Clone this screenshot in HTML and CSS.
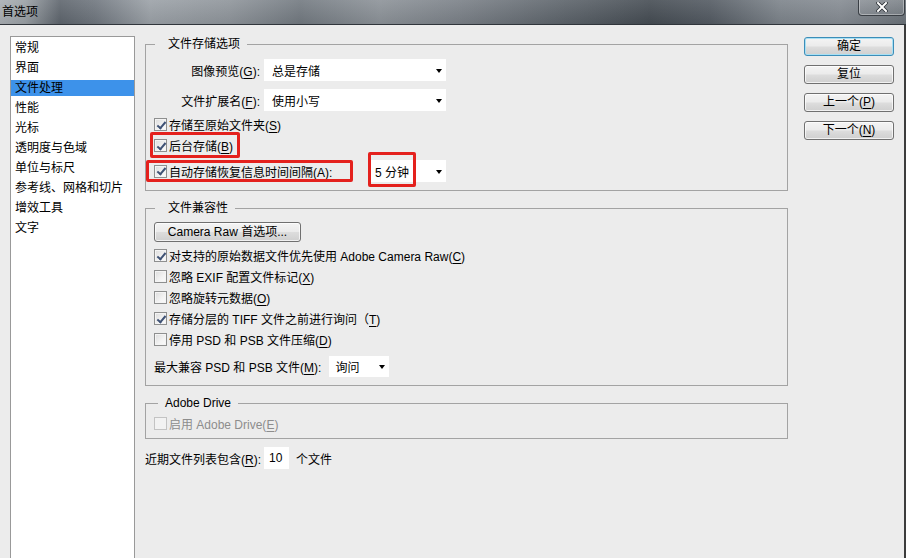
FILE: index.html
```html
<!DOCTYPE html>
<html lang="zh-CN">
<head>
<meta charset="utf-8">
<title>首选项</title>
<link rel="stylesheet" href="styles.css">
</head>
<body>
<div class="window">
  <div class="titlebar">
    <span class="title">首选项</span>
    <div class="close">
      <svg width="12" height="10" viewBox="0 0 12 10">
        <path d="M2 1 L10 9 M10 1 L2 9" stroke="#2a2f35" stroke-width="3.6" stroke-linecap="square"/>
        <path d="M2 1 L10 9 M10 1 L2 9" stroke="#ffffff" stroke-width="2" stroke-linecap="square"/>
      </svg>
    </div>
  </div>
  <div class="body">
    <ul class="cats">
      <li>常规</li>
      <li>界面</li>
      <li class="sel">文件处理</li>
      <li>性能</li>
      <li>光标</li>
      <li>透明度与色域</li>
      <li>单位与标尺</li>
      <li>参考线、网格和切片</li>
      <li>增效工具</li>
      <li>文字</li>
    </ul>

    <div class="main">
      <fieldset class="group g-save">
        <legend class="lg-cjk">文件存储选项</legend>
        <div class="frow">
          <span class="flabel">图像预览(<u>G</u>):</span>
          <div class="select s-wide"><span>总是存储</span><i class="arrow"></i></div>
        </div>
        <div class="frow frow2">
          <span class="flabel">文件扩展名(<u>F</u>):</span>
          <div class="select s-wide"><span>使用小写</span><i class="arrow"></i></div>
        </div>
        <div class="crow crow-first">
          <span class="cb on"></span><span class="ctext">存储至原始文件夹(<u>S</u>)</span>
        </div>
        <div class="crow">
          <span class="cb on"></span><span class="ctext">后台存储(<u>B</u>)</span>
          <span class="mark mark-bg"></span>
        </div>
        <div class="crow crow-sel">
          <span class="cb on"></span><span class="ctext ctext-fixed">自动存储恢复信息时间间隔(<u>A</u>):</span>
          <div class="select s-min"><span>5 分钟</span><i class="arrow"></i></div>
          <span class="mark mark-auto"></span>
          <span class="mark mark-min"></span>
        </div>
      </fieldset>

      <fieldset class="group g-compat">
        <legend class="lg-cjk">文件兼容性</legend>
        <div class="btn btn-raw">Camera Raw 首选项...</div>
        <div class="crow crow-first2">
          <span class="cb on"></span><span class="ctext">对支持的原始数据文件优先使用 Adobe Camera Raw(<u>C</u>)</span>
        </div>
        <div class="crow">
          <span class="cb"></span><span class="ctext">忽略 EXIF 配置文件标记(<u>X</u>)</span>
        </div>
        <div class="crow">
          <span class="cb"></span><span class="ctext">忽略旋转元数据(<u>O</u>)</span>
        </div>
        <div class="crow">
          <span class="cb on"></span><span class="ctext">存储分层的 TIFF 文件之前进行询问（<u>T</u>)</span>
        </div>
        <div class="crow">
          <span class="cb"></span><span class="ctext">停用 PSD 和 PSB 文件压缩(<u>D</u>)</span>
        </div>
        <div class="frow frow-max">
          <span class="plain">最大兼容 PSD 和 PSB 文件(<u>M</u>):</span>
          <div class="select s-ask"><span>询问</span><i class="arrow"></i></div>
        </div>
      </fieldset>

      <fieldset class="group g-drive">
        <legend class="lg-lat">Adobe Drive</legend>
        <div class="crow disabled">
          <span class="cb"></span><span class="ctext">启用 Adobe Drive(<u>E</u>)</span>
        </div>
      </fieldset>

      <div class="recent">
        <span>近期文件列表包含(<u>R</u>):</span>
        <span class="num">10</span>
        <span>个文件</span>
      </div>
    </div>

    <div class="buttons">
      <div class="btn btn-side btn-default">确定</div>
      <div class="btn btn-side">复位</div>
      <div class="btn btn-side">上一个(<u>P</u>)</div>
      <div class="btn btn-side">下一个(<u>N</u>)</div>
    </div>
  </div>
</div>
</body>
</html>
```

FILE: styles.css
```css
* { box-sizing: border-box; }

html, body {
  margin: 0;
  padding: 0;
}

body {
  width: 906px;
  height: 558px;
  overflow: hidden;
  font-family: "Liberation Sans", "Noto Sans CJK SC", sans-serif;
  font-size: 12px;
  color: #000;
  background: #ececec;
}

u { text-decoration: underline; text-underline-offset: 2px; }

.window {
  width: 906px;
  height: 558px;
  display: flex;
  flex-direction: column;
  overflow: hidden;
}

/* ---------- title bar ---------- */
.titlebar {
  height: 25px;
  flex: none;
  display: flex;
  align-items: flex-start;
  justify-content: space-between;
  border-bottom: 1px solid #30353b;
  background:
    linear-gradient(180deg, rgba(255,255,255,0.10) 0%, rgba(0,0,0,0.06) 100%),
    linear-gradient(90deg, #a9aeb3 0px, #9aa0a5 25px, #5e656d 60px, #6f767e 95px, #9ba1a7 150px, #8e949a 230px, #727980 300px, #8c9298 380px, #7a8087 460px, #5d646b 560px, #454c53 650px, #535a62 710px, #7c838a 780px, #858b92 840px, #6b7279 906px);
}

.title {
  padding: 4px 0 0 2px;
  font-size: 12px;
  line-height: 16px;
  color: #000;
}

.close {
  width: 47px;
  height: 17px;
  margin-right: 1px;
  margin-top: -1px;
  border: 1px solid #3a3f45;
  border-top: none;
  border-radius: 0 0 4px 4px;
  box-shadow: inset 0 0 0 1px rgba(255,255,255,0.35);
  background: linear-gradient(180deg, rgba(255,255,255,0.12), rgba(255,255,255,0.04));
  display: flex;
  align-items: center;
  justify-content: center;
}

/* ---------- body ---------- */
.body {
  flex: 1;
  display: flex;
  align-items: flex-start;
  padding: 11px 0 0 10px;
  border-right: 2px solid #3c3c3c;
}

.cats {
  list-style: none;
  margin: 0;
  padding: 1px 0 0;
  width: 125px;
  height: 540px;
  flex: none;
  background: #fff;
  border: 1px solid #999;
}

.cats li {
  height: 16px;
  line-height: 16px;
  margin: 2px 0 4px;
  padding-left: 4px;
  white-space: nowrap;
}

.cats li.sel {
  background: #3d92ea;
}

.main {
  width: 643px;
  margin-left: 10px;
  flex: none;
}

/* ---------- group boxes ---------- */
.group {
  margin: 0;
  padding: 0 8px 8px 8px;
  border: 1px solid #a3a3a3;
  min-inline-size: 0;
}

legend {
  line-height: 16px;
  height: 16px;
  font-size: 12px;
}
.lg-cjk { margin-left: 1px; padding: 0 7px 0 13px; }
.lg-lat { margin-left: 4px; padding: 0 7px; }

.g-save { padding-top: 7px; }
.g-compat { margin-top: 9px; padding-top: 6px; }
.g-drive { margin-top: 9px; padding-top: 2px; padding-bottom: 4px; }

.frow {
  height: 22px;
  display: flex;
  align-items: center;
}
.frow2 { margin-top: 8px; }

.flabel {
  width: 106px;
  margin-right: 4px;
  text-align: right;
  white-space: nowrap;
}

.select {
  height: 22px;
  background: #fff;
  display: flex;
  align-items: center;
  justify-content: space-between;
  padding: 0 4px 0 7px;
}
.s-wide { width: 182px; padding-left: 8px; }
.s-min { width: 77px; padding-left: 6px; }
.s-ask { width: 60px; margin-left: 8px; padding-left: 6px; height: 21px; }

.arrow {
  width: 0;
  height: 0;
  border-left: 3.5px solid transparent;
  border-right: 3.5px solid transparent;
  border-top: 4px solid #000;
  margin-top: 1px;
}

.crow {
  position: relative;
  height: 21px;
  display: flex;
  align-items: center;
  white-space: nowrap;
}
.crow-first { margin-top: 3px; }
.crow-sel { margin-top: 4px; height: 22px; }
.crow-first2 { margin-top: 3px; }

.ctext { margin-left: 2px; }
.ctext-fixed { width: 200px; }

.cb {
  width: 13px;
  height: 13px;
  flex: none;
  position: relative;
  border: 1px solid #8e8f8f;
  background: linear-gradient(135deg, #dcdcdc 0%, #f3f3f3 60%, #fbfbfb 100%);
  box-shadow: inset 0 0 0 1px #f4f4f4;
}
.cb.on::after {
  content: "";
  position: absolute;
  left: 3.5px;
  top: 0.5px;
  width: 3px;
  height: 7px;
  border: solid #3f5275;
  border-width: 0 2px 2px 0;
  transform: rotate(40deg);
}

.disabled { color: #8d8d8d; }
.disabled .cb {
  border-color: #c3c3c3;
  background: #f2f2f2;
  box-shadow: none;
}

.frow-max { margin-top: 6px; height: 21px; }
.plain { white-space: nowrap; }

/* red annotation boxes (overlays) */
.mark {
  position: absolute;
  border: 3px solid #e4211d;
  border-radius: 2px;
  pointer-events: none;
}
.mark-bg { left: -4px; top: -3px; width: 90px; height: 26px; }
.mark-auto { left: -8px; top: 0; width: 207px; height: 22px; }
.mark-min { left: 214px; top: -8px; width: 48px; height: 35px; }

/* ---------- buttons ---------- */
.btn {
  height: 19px;
  border: 1px solid #707070;
  border-radius: 3px;
  background: linear-gradient(180deg, #f4f4f4 0%, #ebebeb 48%, #dddddd 52%, #cfcfcf 100%);
  box-shadow: inset 0 0 0 1px rgba(255,255,255,0.7);
  text-align: center;
  line-height: 17px;
  white-space: nowrap;
}

.btn-raw { width: 147px; height: 20px; line-height: 18px; }

.buttons {
  width: 90px;
  margin-left: 16px;
  padding-top: 1px;
  display: flex;
  flex-direction: column;
  gap: 9px;
  flex: none;
}

.btn-default {
  border-color: #3c8db8;
  box-shadow: inset 0 0 0 1px #a8e0f4;
}

/* ---------- recent files ---------- */
.recent {
  margin-top: 8px;
  height: 22px;
  display: flex;
  align-items: center;
  white-space: nowrap;
}
.recent .num {
  width: 25px;
  height: 22px;
  line-height: 22px;
  background: #fff;
  margin: 0 7px 0 3px;
  padding-left: 5px;
}
```
